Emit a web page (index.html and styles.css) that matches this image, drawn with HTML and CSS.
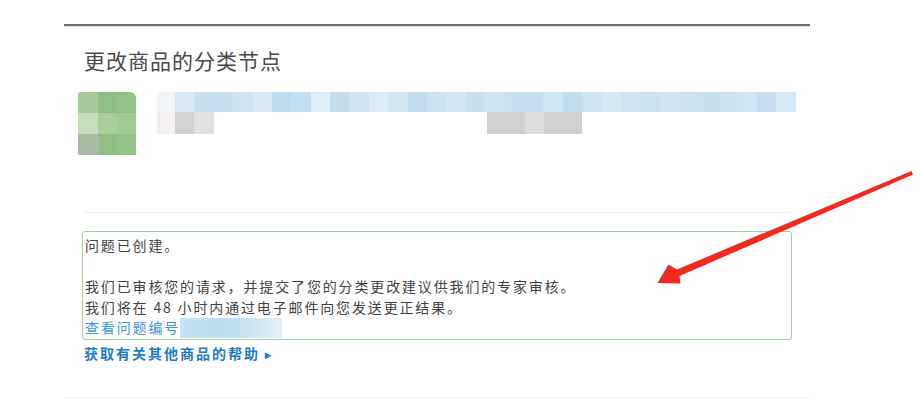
FILE: index.html
```html
<!DOCTYPE html>
<html lang="zh-CN">
  <head>
    <meta charset="utf-8">
    <title>更改商品的分类节点</title>
    <link rel="stylesheet" href="styles.css">
  </head>
  <body>
    <div class="page">
      <div class="rule"></div>
      <h1 class="title">更改商品的分类节点</h1>

      <div class="product">
        <div class="thumb">
          <span style="background:#a9c99c"></span><span style="background:#8fc083"></span><span style="background:#92c286"></span>
          <span style="background:#c6dcbc"></span><span style="background:#a9d09b"></span><span style="background:#a2cc94"></span>
          <span style="background:#a9b9a2"></span><span style="background:#8fbf82"></span><span style="background:#93c387"></span>
        </div>
        <div class="info">
          <div class="cells name">
            <span style="background:#f1f5f9"></span>
            <span style="background:#d8e8f4"></span><span style="background:#c8e0f0"></span><span style="background:#c8e0f0"></span><span style="background:#cde3f1"></span>
            <span style="background:#d8e9f4"></span><span style="background:#bcdcee"></span><span style="background:#c4e0f0"></span><span style="background:#e0eef7"></span>
            <span style="background:#c5dced"></span><span style="background:#cfe3f1"></span><span style="background:#dcebf5"></span><span style="background:#d4e6f2"></span>
            <span style="background:#c4ddee"></span><span style="background:#cce2f0"></span><span style="background:#d2e6f3"></span><span style="background:#c8e0f0"></span>
            <span style="background:#cee4f2"></span><span style="background:#c8e0f0"></span><span style="background:#c6e0f0"></span><span style="background:#cfe6f3"></span>
            <span style="background:#c2ddee"></span><span style="background:#cde3f1"></span><span style="background:#d6e8f4"></span><span style="background:#cfe3f1"></span>
            <span style="background:#cbe1f0"></span><span style="background:#cfe3f1"></span><span style="background:#cbe1f0"></span><span style="background:#c9e0ef"></span>
            <span style="background:#cbe1f0"></span><span style="background:#cfe5f2"></span><span style="background:#c7def0"></span><span style="background:#d8eaf5"></span>
          </div>
          <div class="meta">
            <div class="cells">
              <span style="background:#f3f0ef"></span><span style="background:#d2d2d2"></span><span style="background:#e0e0e0"></span>
            </div>
            <div class="cells id">
              <span class="wide" style="background:#d0d0d0"></span><span style="background:#dcdcdc"></span><span class="wide" style="background:#d0d0d0"></span>
            </div>
          </div>
        </div>
      </div>

      <div class="divider"></div>

      <div class="notice">
        <p class="line">问题已创建。</p>
        <p class="line gap">我们已审核您的请求，并提交了您的分类更改建议供我们的专家审核。</p>
        <p class="line">我们将在 48 小时内通过电子邮件向您发送更正结果。</p>
        <p class="line"><a class="case" href="#">查看问题编号<span class="blur"></span></a></p>
      </div>
      <a class="help" href="#">获取有关其他商品的帮助 <span class="caret">&#9656;</span></a>

      <div class="foot"></div>

      <svg class="arrow" width="922" height="401" viewBox="0 0 922 401">
        <polygon points="911.5,171 677,269.5 668.5,264.5 657.5,283 680.5,283.5 679.5,276 913,174.5" fill="#f2291f"/>
      </svg>
    </div>
  </body>
</html>
```

FILE: styles.css
```css
html {
  font-family: "Noto Sans CJK SC", "Noto Sans", sans-serif;
}

body {
  margin: 0;
  background-color: #fff;
  color: #424242;
}

.page {
  position: relative;
  width: 746px;
  margin-left: 64px;
  padding-top: 24px;
  height: 377px;
}

.rule {
  height: 2px;
  background-color: #6e6e6e;
  box-shadow: 0 1px 1px rgba(0, 0, 0, .15);
}

.title {
  margin: 19px 0 0 20px;
  font-size: 21px;
  font-weight: normal;
  letter-spacing: 1px;
  line-height: 30px;
  color: #4a4a4a;
}

/* 打码的商品信息 */
.product {
  display: flex;
  margin-top: 17px;
  padding-left: 14px;
}

.thumb {
  display: grid;
  grid-template-columns: 20px 19px 19px;
  grid-template-rows: 21px 21px 21px;
  border-radius: 3px 6px 0 2px;
  overflow: hidden;
  filter: blur(0.6px);
}

.info {
  margin-left: 21px;
}

.cells {
  display: flex;
  height: 20px;
}

.cells span {
  width: 19.4px;
  flex: none;
}

.name span:first-child {
  width: 18px;
}

.meta {
  display: flex;
  height: 22px;
}

.meta .cells {
  height: 22px;
}

.meta .cells span:first-child {
  width: 18px;
}

.id {
  margin-left: 273px;
}

.cells .wide,
.meta .id span:first-child {
  width: 38px;
}

.divider {
  height: 1px;
  margin: 57px 20px 0 20px;
  background-color: #efefef;
}

.notice {
  margin: 18px 18px 0 18px;
  height: 104px;
  padding: 3px 0 0 2px;
  border: 1px solid #9fd19b;
  border-radius: 3px;
  font-size: 14px;
  letter-spacing: 1.85px;
  line-height: 20.5px;
}

.notice .line {
  margin: 0;
  height: 20.5px;
}

.notice .gap {
  margin-top: 20.5px;
}

.case {
  color: #3d95d6;
  text-decoration: none;
}

.blur {
  display: inline-block;
  width: 102px;
  height: 20px;
  vertical-align: -5px;
  background: linear-gradient(to right, #c6e2f1 0, #bcdcee 40%, #cbe3f1 70%, #e4f0f7 100%);
}

.help {
  display: inline-block;
  margin: 1px 0 0 20px;
  font-size: 14px;
  letter-spacing: 2px;
  line-height: 20px;
  font-weight: bold;
  color: #1d7cc8;
  text-decoration: none;
}

.caret {
  font-size: 12px;
}

.foot {
  position: absolute;
  left: 0;
  right: 0;
  top: 397px;
  height: 1px;
  background-color: #f3f3f3;
}

.arrow {
  position: absolute;
  left: -64px;
  top: 0;
  filter: blur(0.4px);
}
```
